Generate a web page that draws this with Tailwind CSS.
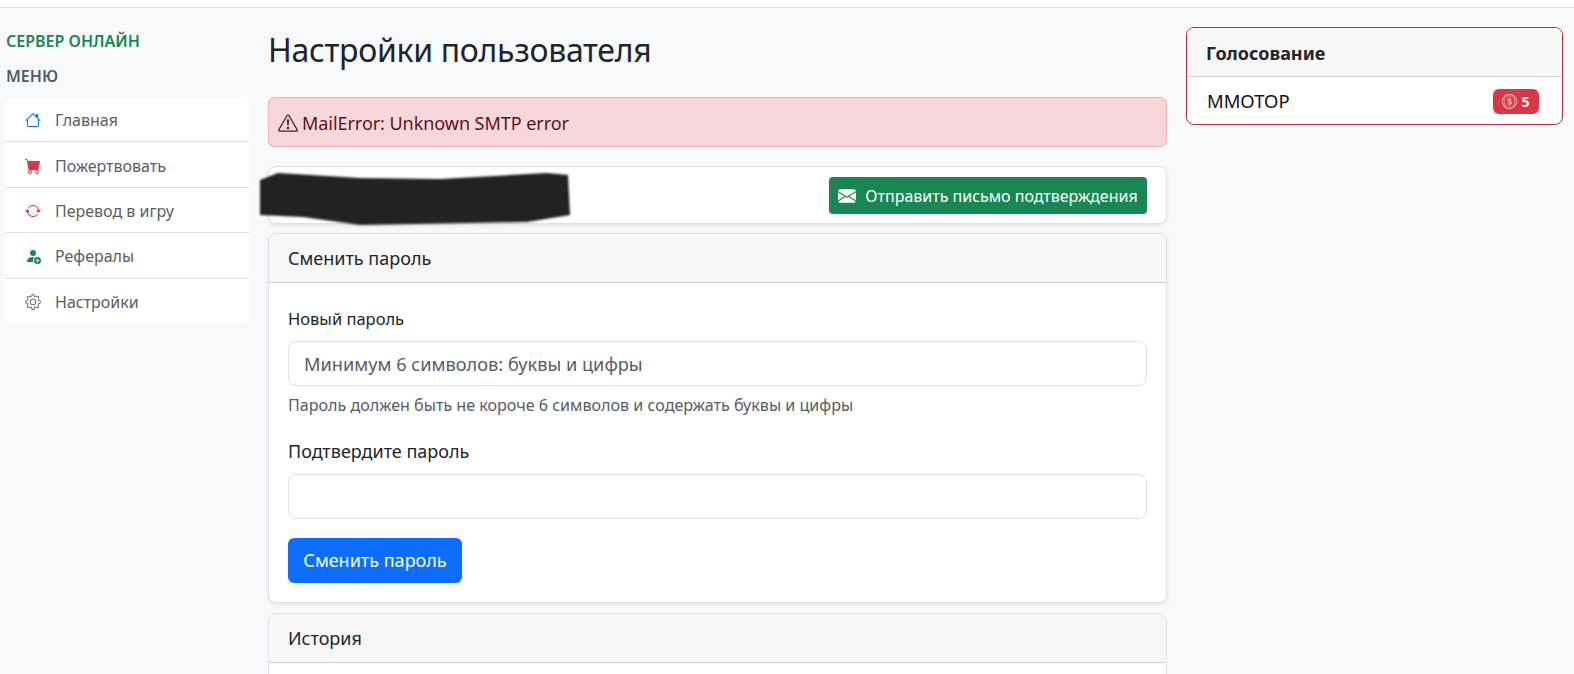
<!DOCTYPE html>
<html lang="ru">
<head>
    <meta charset="UTF-8">
    <meta name="viewport" content="width=device-width, initial-scale=1.0">
    <title>Настройки пользователя</title>
    <script src="https://cdn.jsdelivr.net/npm/@tailwindcss/browser@4"></script>
</head>
<body class="h-screen overflow-hidden bg-[#f8f9fa] text-[#212529] font-['Noto_Sans','Open_Sans',sans-serif]">
    <div class="h-[8px] bg-white border-b border-[#dee2e6]"></div>
    <div class="flex items-start">
        <!-- Sidebar -->
        <aside class="w-[244px] ml-[5px] shrink-0 pt-[22px]">
            <div class="pl-px h-[22px] leading-[22px] text-[16px] font-semibold text-[#198754]">СЕРВЕР ОНЛАЙН</div>
            <div class="pl-px mt-[13px] h-[22px] leading-[22px] text-[16px] font-semibold text-[#555b61]">МЕНЮ</div>
            <ul class="mt-[10px] bg-white rounded-[5px] text-[16px] text-[#595e63]">
                <li class="h-[45px] pt-[2px] flex items-center pl-[20px] gap-[14px] border-b border-[#dee2e6]">
                    <svg class="w-4 h-4 text-[#0d6efd]" viewBox="0 0 16 16" fill="currentColor"><path d="M8.707 1.5a1 1 0 0 0-1.414 0L.646 8.146a.5.5 0 0 0 .708.708L2 8.207V13.5A1.5 1.5 0 0 0 3.5 15h9a1.5 1.5 0 0 0 1.5-1.5V8.207l.646.647a.5.5 0 0 0 .708-.708L13 5.793V2.5a.5.5 0 0 0-.5-.5h-1a.5.5 0 0 0-.5.5v1.293zM13 7.207V13.5a.5.5 0 0 1-.5.5h-9a.5.5 0 0 1-.5-.5V7.207l5-5z"/></svg>
                    <span>Главная</span>
                </li>
                <li class="h-[46px] pt-[2px] flex items-center pl-[20px] gap-[14px] border-b border-[#dee2e6]">
                    <svg class="w-4 h-4 text-[#dc3545]" viewBox="0 0 16 16" fill="currentColor"><path d="M0 1.5A.5.5 0 0 1 .5 1H2a.5.5 0 0 1 .485.379L2.89 3H14.5a.5.5 0 0 1 .491.592l-1.5 8A.5.5 0 0 1 13 12H4a.5.5 0 0 1-.491-.408L2.01 3.607 1.61 2H.5a.5.5 0 0 1-.5-.5M5 12a2 2 0 1 0 0 4 2 2 0 0 0 0-4m7 0a2 2 0 1 0 0 4 2 2 0 0 0 0-4m-7 1a1 1 0 1 1 0 2 1 1 0 0 1 0-2m7 0a1 1 0 1 1 0 2 1 1 0 0 1 0-2"/></svg>
                    <span>Пожертвовать</span>
                </li>
                <li class="h-[45px] pt-[2px] flex items-center pl-[20px] gap-[14px] border-b border-[#dee2e6]">
                    <svg class="w-4 h-4 text-[#dc3545]" viewBox="0 0 16 16" fill="currentColor"><path d="M11.534 7h3.932a.25.25 0 0 1 .192.41l-1.966 2.36a.25.25 0 0 1-.384 0l-1.966-2.36a.25.25 0 0 1 .192-.41m-11 2h3.932a.25.25 0 0 0 .192-.41L2.692 6.23a.25.25 0 0 0-.384 0L.342 8.59A.25.25 0 0 0 .534 9"/><path d="M8 3c-1.552 0-2.94.707-3.857 1.818a.5.5 0 1 1-.771-.636A6.002 6.002 0 0 1 13.917 7H12.9A5 5 0 0 0 8 3M3.1 9a5.002 5.002 0 0 0 8.757 2.182.5.5 0 1 1 .771.636A6.002 6.002 0 0 1 2.083 9z"/></svg>
                    <span>Перевод в игру</span>
                </li>
                <li class="h-[46px] pt-[1px] flex items-center pl-[20px] gap-[14px] border-b border-[#dee2e6]">
                    <svg class="w-4 h-4 text-[#198754]" viewBox="0 0 16 16" fill="currentColor"><path d="M12.5 16a3.5 3.5 0 1 0 0-7 3.5 3.5 0 0 0 0 7m.5-5v1h1a.5.5 0 0 1 0 1h-1v1a.5.5 0 0 1-1 0v-1h-1a.5.5 0 0 1 0-1h1v-1a.5.5 0 0 1 1 0m-2-6a3 3 0 1 1-6 0 3 3 0 0 1 6 0"/><path d="M2 13c0 1 1 1 1 1h5.256A4.5 4.5 0 0 1 8 12.5a4.5 4.5 0 0 1 1.544-3.393Q8.844 9.002 8 9c-5 0-6 3-6 4"/></svg>
                    <span>Рефералы</span>
                </li>
                <li class="h-[44px] pt-[2px] flex items-center pl-[20px] gap-[14px]">
                    <svg class="w-4 h-4 text-[#6c757d]" viewBox="0 0 16 16" fill="currentColor"><path d="M8 4.754a3.246 3.246 0 1 0 0 6.492 3.246 3.246 0 0 0 0-6.492M5.754 8a2.246 2.246 0 1 1 4.492 0 2.246 2.246 0 0 1-4.492 0"/><path d="M9.796 1.343c-.527-1.79-3.065-1.79-3.592 0l-.094.319a.873.873 0 0 1-1.255.52l-.292-.16c-1.64-.892-3.433.902-2.54 2.541l.159.292a.873.873 0 0 1-.52 1.255l-.319.094c-1.79.527-1.79 3.065 0 3.592l.319.094a.873.873 0 0 1 .52 1.255l-.16.292c-.892 1.64.901 3.434 2.541 2.54l.292-.159a.873.873 0 0 1 1.255.52l.094.319c.527 1.79 3.065 1.79 3.592 0l.094-.319a.873.873 0 0 1 1.255-.52l.292.16c1.64.893 3.434-.902 2.54-2.541l-.159-.292a.873.873 0 0 1 .52-1.255l.319-.094c1.79-.527 1.79-3.065 0-3.592l-.319-.094a.873.873 0 0 1-.52-1.255l.16-.292c.893-1.64-.902-3.433-2.541-2.54l-.292.159a.873.873 0 0 1-1.255-.52zm-2.633.283c.246-.835 1.428-.835 1.674 0l.094.319a1.873 1.873 0 0 0 2.693 1.115l.291-.16c.764-.415 1.6.42 1.184 1.185l-.159.292a1.873 1.873 0 0 0 1.116 2.692l.318.094c.835.246.835 1.428 0 1.674l-.319.094a1.873 1.873 0 0 0-1.115 2.693l.16.291c.415.764-.42 1.6-1.185 1.184l-.291-.159a1.873 1.873 0 0 0-2.693 1.116l-.094.318c-.246.835-1.428.835-1.674 0l-.094-.319a1.873 1.873 0 0 0-2.692-1.115l-.292.16c-.764.415-1.6-.42-1.184-1.185l.159-.291A1.873 1.873 0 0 0 1.945 8.93l-.319-.094c-.835-.246-.835-1.428 0-1.674l.319-.094A1.873 1.873 0 0 0 3.06 4.377l-.16-.292c-.415-.764.42-1.6 1.185-1.184l.292.159a1.873 1.873 0 0 0 2.692-1.115z"/></svg>
                    <span>Настройки</span>
                </li>
            </ul>
        </aside>

        <!-- Main column -->
        <main class="w-[899px] ml-[19px] shrink-0">
            <h1 class="h-[64px] mt-[13px] leading-[58px] text-[32px] tracking-[-0.3px]">Настройки пользователя</h1>
            <div class="mt-[12px] h-[50px] pt-[2px] flex items-center gap-[4px] px-[9px] rounded-[6px] border border-[#f1aeb5] bg-[#f8d7da] text-[#58151c] text-[18px] tracking-[-0.05px]">
                <svg class="w-[20px] h-[20px]" viewBox="0 0 16 16" fill="currentColor"><path d="M7.938 2.016A.13.13 0 0 1 8.002 2a.13.13 0 0 1 .063.016.15.15 0 0 1 .054.057l6.857 11.667c.036.06.035.124.002.183a.2.2 0 0 1-.054.06.1.1 0 0 1-.066.017H1.146a.1.1 0 0 1-.066-.017.2.2 0 0 1-.054-.06.18.18 0 0 1 .002-.183L7.884 2.073a.15.15 0 0 1 .054-.057m1.044-.45a1.13 1.13 0 0 0-1.96 0L.165 13.233c-.457.778.091 1.767.98 1.767h13.713c.889 0 1.438-.99.98-1.767z"/><path d="M7.002 12a1 1 0 1 1 2 0 1 1 0 0 1-2 0M7.1 5.995a.905.905 0 1 1 1.8 0l-.35 3.507a.552.552 0 0 1-1.1 0z"/></svg>
                <span>MailError: Unknown SMTP error</span>
            </div>

            <div class="relative mt-[19px] h-[58px] flex items-center justify-end pr-[19px] bg-white border border-[#dee2e6] rounded-[8px] shadow-[0_2px_4px_rgba(0,0,0,0.075)]">
                <svg class="absolute left-[-9px] top-[3px] w-[312px] h-[56px] blur-[1px]" viewBox="0 0 312 56"><path d="M18 3 L100 8 L180 9 L287 3 L308 5 L310 45 L267 52 L100 55 L43 47 L0 45 L0 10 Z" fill="#222"/></svg>
                <button class="h-[37px] w-[318px] pt-[1px] flex items-center justify-center gap-[9px] rounded-[4px] bg-[#198754] text-white text-[16px]">
                    <svg class="w-[18px] h-[18px]" viewBox="0 0 16 16" fill="currentColor"><path d="M.05 3.555A2 2 0 0 1 2 2h12a2 2 0 0 1 1.95 1.555L8 8.414zM0 4.697v7.104l5.803-3.558zM6.761 8.83l-6.57 4.027A2 2 0 0 0 2 14h12a2 2 0 0 0 1.808-1.144l-6.57-4.027L8 9.586zm3.436-.586L16 11.801V4.697z"/></svg>
                    <span>Отправить письмо подтверждения</span>
                </button>
            </div>

            <section class="mt-[9px] bg-white border border-[#dee2e6] rounded-[8px] shadow-[0_2px_4px_rgba(0,0,0,0.075)] overflow-hidden">
                <div class="h-[49px] pt-[1px] flex items-center px-[19px] bg-[#f7f7f7] border-b border-[#cfd2d5] text-[18px]">Сменить пароль</div>
                <div class="px-[19px] pt-[23px] pb-[19px]">
                    <label class="block h-[26px] leading-[26px] text-[16.5px]">Новый пароль</label>
                    <input type="text" placeholder="Минимум 6 символов: буквы и цифры" class="block mt-[9px] w-full h-[45px] px-[15px] border border-[#dee2e6] rounded-[8px] bg-white text-[18.2px] placeholder-[#595c5f]">
                    <p class="mt-[8px] h-[22px] leading-[22px] text-[16.1px] text-[#595c5f]">Пароль должен быть не короче 6 символов и содержать буквы и цифры</p>
                    <label class="block mt-[22px] h-[26px] leading-[26px] text-[18px]">Подтвердите пароль</label>
                    <input type="password" class="block mt-[10px] w-full h-[45px] px-[15px] border border-[#dee2e6] rounded-[8px] bg-white">
                    <button class="block mt-[19px] h-[45px] w-[174px] rounded-[6px] bg-[#0d6efd] text-white text-[18px]">Сменить пароль</button>
                </div>
            </section>

            <section class="mt-[10px] bg-white border border-[#dee2e6] rounded-[8px] overflow-hidden">
                <div class="h-[49px] flex items-center px-[19px] bg-[#f7f7f7] border-b border-[#cfd2d5] text-[18px]">История</div>
                <div class="h-[60px]"></div>
            </section>
        </main>

        <!-- Right column -->
        <aside class="w-[377px] ml-[19px] shrink-0 mt-[19px]">
            <div class="bg-white border border-[#b02a37] rounded-[8px] overflow-hidden">
                <div class="h-[49px] pt-[2px] flex items-center px-[19px] bg-[#f7f7f7] border-b border-[#cfd2d5] text-[18px] font-bold">Голосование</div>
                <div class="h-[47px] pt-[1px] flex items-center justify-between pl-[20px] pr-[23px] text-[18.4px] text-[#111]">
                    <span>MMOTOP</span>
                    <span class="h-[25px] w-[46px] flex items-center justify-center gap-[4px] rounded-[6px] bg-[#dc3545] text-white text-[14px] font-bold">
                        <svg class="w-[15px] h-[15px] text-white/80" viewBox="0 0 16 16" fill="currentColor"><path d="M5.5 9.511c.076.954.83 1.697 2.182 1.785V12h.6v-.709c1.4-.098 2.218-.846 2.218-1.932 0-.987-.626-1.496-1.745-1.76l-.473-.112V5.57c.6.068.982.396 1.074.85h1.052c-.076-.919-.864-1.638-2.126-1.716V4h-.6v.719c-1.195.117-2.01.836-2.01 1.853 0 .9.606 1.472 1.613 1.707l.397.098v2.034c-.615-.093-1.022-.43-1.114-.9zm2.177-2.166c-.59-.137-.91-.416-.91-.836 0-.47.345-.822.915-.925v1.76h-.005zm.692 1.193c.717.166 1.048.435 1.048.91 0 .542-.412.914-1.135.982V8.518z"/><path d="M8 15A7 7 0 1 1 8 1a7 7 0 0 1 0 14m0 1A8 8 0 1 0 8 0a8 8 0 0 0 0 16"/><path d="M8 13.5a5.5 5.5 0 1 1 0-11 5.5 5.5 0 0 1 0 11m0 .5A6 6 0 1 0 8 2a6 6 0 0 0 0 12"/></svg>
                        <span>5</span>
                    </span>
                </div>
            </div>
        </aside>
    </div>
</body>
</html>
